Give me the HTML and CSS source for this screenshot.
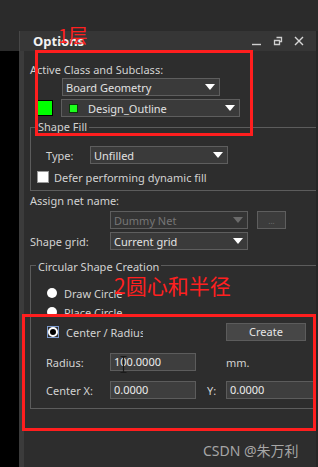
FILE: index.html
```html
<!DOCTYPE html>
<html lang="en">
<head>
    <meta charset="UTF-8">
    <title>Options</title>
    <link rel="stylesheet" href="styles.css">
</head>
<body>
    <div class="topbar"></div>
    <div class="stage">
        <div class="gutter"></div>
        <div class="panel">
            <div class="titlebar">
                <span class="title">Options</span>
                <div class="win-icons">
                    <svg width="10" height="10" viewBox="0 0 10 10"><path d="M0 8.5h9" stroke="#cfcfcf" stroke-width="1.4"/></svg>
                    <svg width="10" height="10" viewBox="0 0 10 10"><path d="M3.5 1.5h5v4h-2M1.5 4.5h5v4h-5z" fill="none" stroke="#cfcfcf" stroke-width="1.3"/></svg>
                    <svg width="10" height="10" viewBox="0 0 10 10"><path d="M1 1l8 8M9 1l-8 8" stroke="#d8d8d8" stroke-width="1.4"/></svg>
                </div>
            </div>
            <div class="content">
                <div class="caption caption-first">Active Class and Subclass:</div>
                <div class="select select-board">Board Geometry</div>
                <div class="subclass-row">
                    <span class="swatch"></span>
                    <div class="select select-sub"><span class="mini-swatch"></span>Design_Outline</div>
                </div>

                <div class="group group-fill">
                    <div class="group-title">Shape Fill</div>
                    <div class="field-row row-type">
                        <span class="lbl lbl-type">Type:</span>
                        <div class="select select-mid">Unfilled</div>
                    </div>
                    <div class="check-row">
                        <span class="checkbox"></span>
                        <span>Defer performing dynamic fill</span>
                    </div>
                </div>

                <div class="caption caption-net">Assign net name:</div>
                <div class="field-row row-net">
                    <div class="select select-mid disabled">Dummy Net</div>
                    <div class="dots-btn">...</div>
                </div>
                <div class="field-row row-grid">
                    <span class="lbl lbl-wide">Shape grid:</span>
                    <div class="select select-mid">Current grid</div>
                </div>

                <div class="group group-circle">
                    <div class="group-title group-title-low">Circular Shape Creation</div>
                    <div class="radio-row row-draw">
                        <span class="radio"></span>
                        <span>Draw Circle</span>
                    </div>
                    <div class="radio-row row-place">
                        <span class="radio"></span>
                        <span>Place Circle</span>
                    </div>
                    <div class="field-row row-center">
                        <span class="radio-focus"><span class="radio radio-on"></span></span>
                        <span class="radio-label">Center / Radius</span>
                        <div class="btn-create">Create</div>
                    </div>
                    <div class="field-row row-radius">
                        <span class="lbl lbl-num">Radius:</span>
                        <div class="input input-short">100.0000</div>
                        <span class="unit">mm.</span>
                    </div>
                    <div class="field-row row-xy">
                        <span class="lbl lbl-num">Center X:</span>
                        <div class="input input-short">0.0000</div>
                        <span class="lbl-y">Y:</span>
                        <div class="input input-long">0.0000</div>
                    </div>
                </div>
            </div>
        </div>
        <div class="edge"></div>
    </div>

    <svg class="ibeam" width="7" height="17" viewBox="0 0 7 17"><path d="M0.5 0.5h2.5l0.5 1 0.5-1h2.5M3.5 1.5v14M0.5 16.5h2.5l0.5-1 0.5 1h2.5" fill="none" stroke="#1a1a1a" stroke-width="1.2"/></svg>

    <div class="note-box note-box-1"></div>
    <div class="note-box note-box-2"></div>
    <span class="note note-1">1层</span>
    <span class="note note-2">2圆心和半径</span>
    <span class="watermark">CSDN @朱万利</span>
</body>
</html>
```

FILE: styles.css
```css
* {
    box-sizing: border-box;
}
body {
    margin: 0;
    width: 318px;
    height: 467px;
    overflow: hidden;
    position: relative;
    background: #000;
    font-family: "Noto Sans", "Noto Sans CJK SC", sans-serif;
    font-size: 11px;
    color: #d2d2d2;
}
.topbar {
    height: 31px;
    background: #2b2b2b;
}
.stage {
    display: flex;
    height: 436px;
}
.gutter {
    width: 19px;
    background: linear-gradient(#2b2b2b 20px, #000 20px);
}
.edge {
    width: 2px;
    background: #262626;
}
.panel {
    width: 297px;
    display: flex;
    flex-direction: column;
    overflow: hidden;
}
.titlebar {
    height: 20px;
    display: flex;
    align-items: center;
    padding: 0 12px 0 13px;
    background: #363636;
    border-left: 1px solid #474747;
}
.title {
    font-size: 13px;
    font-weight: bold;
    color: #f2f2f2;
}
.win-icons {
    margin-left: auto;
    display: flex;
    gap: 11px;
}
.content {
    flex: 1;
    background: #2d2d2d;
    border-left: 5px solid #3b3b3b;
    padding-left: 6px;
}
.caption {
    line-height: 16px;
    white-space: nowrap;
}
.caption-first {
    margin-top: 11px;
}
.caption-net {
    margin-top: 2px;
}

/* drop-down lists */
.select {
    height: 18px;
    display: flex;
    align-items: center;
    padding-left: 3px;
    background: #3a3a3a;
    border: 1px solid #5e5e5e;
    color: #e2e2e2;
    white-space: nowrap;
}
.select::after {
    content: "";
    margin-left: auto;
    margin-right: 4px;
    border-left: 5px solid transparent;
    border-right: 5px solid transparent;
    border-top: 6px solid #fff;
}
.select.disabled {
    color: #767676;
    background: #343434;
    margin-left: 80px;
}
.select.disabled::after {
    border-top-color: #6a6a6a;
}
.select-board {
    width: 158px;
    margin-left: 32px;
}
.select-sub {
    width: 179px;
    margin-left: 8px;
}
.select-mid {
    width: 138px;
}
.subclass-row {
    display: flex;
    align-items: center;
    margin-top: 3px;
}
.swatch {
    width: 16px;
    height: 16px;
    margin-left: 7px;
    background: #00ff00;
    border: 1px solid #000;
}
.mini-swatch {
    width: 9px;
    height: 9px;
    margin: 0 10px 0 4px;
    background: #1cff1c;
    border: 1px solid #0c3a0c;
}

/* group boxes */
.group {
    border: 1px solid #5c5c5c;
    border-right: 0;
}
.group-title {
    width: fit-content;
    margin: -9px 0 0 5px;
    padding: 0 2px;
    line-height: 16px;
    background: #2d2d2d;
    white-space: nowrap;
}
.group-title-low {
    margin-top: -7px;
}
.group-fill {
    margin-top: 10px;
    padding-bottom: 6px;
}
.group-circle {
    margin-top: 15px;
    padding-bottom: 9px;
}
.field-row {
    display: flex;
    align-items: center;
    height: 18px;
}
.lbl {
    flex: none;
}
.lbl-type {
    width: 44px;
    margin-left: 15px;
}
.lbl-wide {
    width: 80px;
}
.lbl-num {
    width: 64px;
    margin-left: 15px;
}
.row-type {
    margin-top: 11px;
}
.check-row {
    display: flex;
    align-items: center;
    height: 14px;
    margin-top: 6px;
}
.checkbox {
    width: 12px;
    height: 12px;
    margin: 0 5px 0 6px;
    background: #fff;
    border: 1px solid #9a9a9a;
}
.row-net {
    margin-top: 2px;
}
.row-grid {
    margin-top: 3px;
}
.dots-btn {
    width: 29px;
    height: 18px;
    margin-left: 9px;
    background: #3c3c3c;
    border: 1px solid #5e5e5e;
    color: #707070;
    font-size: 8px;
    text-align: center;
    line-height: 18px;
}

/* circle options */
.radio-row {
    display: flex;
    align-items: center;
    height: 16px;
}
.row-draw {
    margin-top: 10px;
}
.row-place {
    margin-top: 3px;
}
.radio {
    width: 10px;
    height: 10px;
    margin: 0 7px 0 16px;
    border-radius: 50%;
    background: #fff;
}
.radio-focus {
    display: flex;
    align-items: center;
    justify-content: center;
    width: 12px;
    height: 12px;
    margin: 0 7px 0 16px;
    border: 1px solid #7d9ccf;
}
.radio-focus .radio {
    margin: 0;
}
.radio-on {
    border: 2px solid #fff;
    background: #000;
}
.row-center {
    margin-top: 3px;
}
.radio-label {
    width: 77px;
    overflow: hidden;
    white-space: nowrap;
}
.btn-create {
    width: 80px;
    height: 18px;
    margin-left: 83px;
    background: #474747;
    border: 1px solid #5c5c5c;
    color: #e6e6e6;
    text-align: center;
    line-height: 16px;
    flex: none;
}
.row-radius {
    margin-top: 12px;
}
.row-xy {
    margin-top: 10px;
}
.input {
    height: 18px;
    padding-left: 3px;
    line-height: 16px;
    background: #3e3e3e;
    border: 1px solid #5c5c5c;
    color: #ececec;
    flex: none;
}
.input-short {
    width: 86px;
}
.input-long {
    width: 100px;
}
.unit {
    margin-left: 30px;
}
.lbl-y {
    width: 19px;
    margin-left: 11px;
    flex: none;
}

/* overlays */
.ibeam {
    position: absolute;
    left: 120px;
    top: 356px;
}
.note-box {
    position: absolute;
    border: 3px solid #ff1e1e;
}
.note-box-1 {
    left: 35px;
    top: 50px;
    width: 218px;
    height: 86px;
}
.note-box-2 {
    left: 22px;
    top: 314px;
    width: 294px;
    height: 117px;
}
.note {
    position: absolute;
    color: #ff2020;
    font-family: "Noto Sans CJK SC", sans-serif;
    line-height: 1;
}
.note-1 {
    left: 58px;
    top: 25px;
    font-size: 19px;
}
.note-2 {
    left: 114px;
    top: 275px;
    font-size: 21px;
}
.watermark {
    position: absolute;
    left: 203px;
    top: 440px;
    font-family: "Noto Sans", "Noto Sans CJK SC", sans-serif;
    font-size: 14px;
    color: #a6a6a6;
}
```
